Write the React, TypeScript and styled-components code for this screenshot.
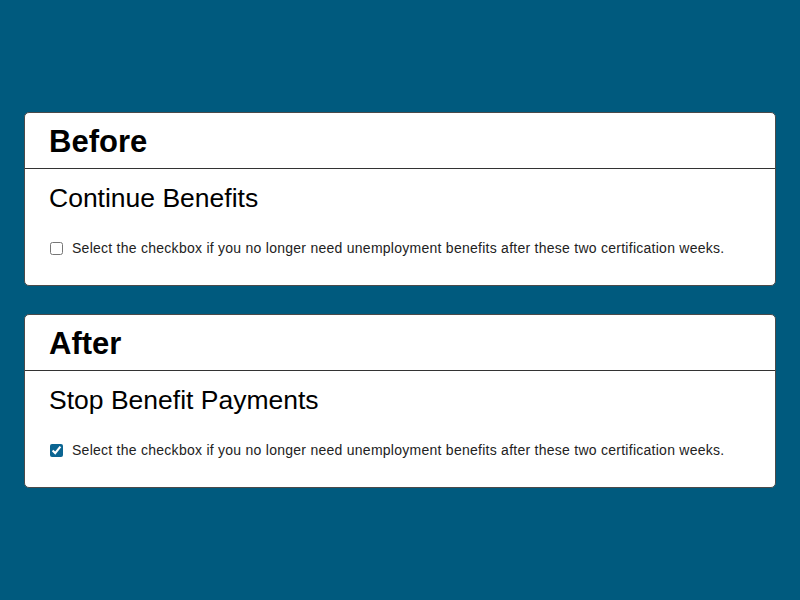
import styled, { createGlobalStyle } from "styled-components";

const GlobalStyle = createGlobalStyle`
    html, body {
        margin: 0;
        padding: 0;
        background-color: #005a7e;
    }
    body {
        font-family: "Liberation Sans", Arial, sans-serif;
    }
`;

const StyledPage = styled.div`
    min-height: 600px;
    display: flex;
    flex-direction: column;
    justify-content: center;
    gap: 28px;
    padding: 0 24px;
    box-sizing: border-box;
`;

const StyledCard = styled.section`
    background-color: #ffffff;
    border: 1px solid #4a4a4a;
    border-radius: 5px;
    color: #000;
`;

const StyledHeader = styled.div`
    height: 55px;
    display: flex;
    align-items: center;
    padding: 0 24px;
    border-bottom: 1px solid #333;

    h2 {
        margin: 0;
        font-size: 31px;
        font-weight: bold;
        padding-top: 3px;
    }
`;

const StyledBody = styled.div`
    padding: 14px 24px 29px;

    h3 {
        margin: 0;
        font-size: 26.5px;
        font-weight: normal;
        line-height: 30px;
    }
`;

const StyledCheck = styled.label`
    display: flex;
    align-items: center;
    gap: 9px;
    margin-top: 27px;
    font-size: 14px;
    line-height: 16px;
    letter-spacing: 0.26px;
    color: #222;

    input {
        margin: 0 0 0 1px;
        width: 13px;
        height: 13px;
        accent-color: #0b6592;
    }
`;

const message =
    "Select the checkbox if you no longer need unemployment benefits after these two certification weeks.";

function Panel({ label, title, checked }: { label: string; title: string; checked: boolean }) {
    return (
        <StyledCard>
            <StyledHeader>
                <h2>{label}</h2>
            </StyledHeader>
            <StyledBody>
                <h3>{title}</h3>
                <StyledCheck>
                    <input type="checkbox" defaultChecked={checked} />
                    {message}
                </StyledCheck>
            </StyledBody>
        </StyledCard>
    );
}

export default function App() {
    return (
        <>
            <GlobalStyle />
            <StyledPage>
                <Panel label="Before" title="Continue Benefits" checked={false} />
                <Panel label="After" title="Stop Benefit Payments" checked={true} />
            </StyledPage>
        </>
    );
}
